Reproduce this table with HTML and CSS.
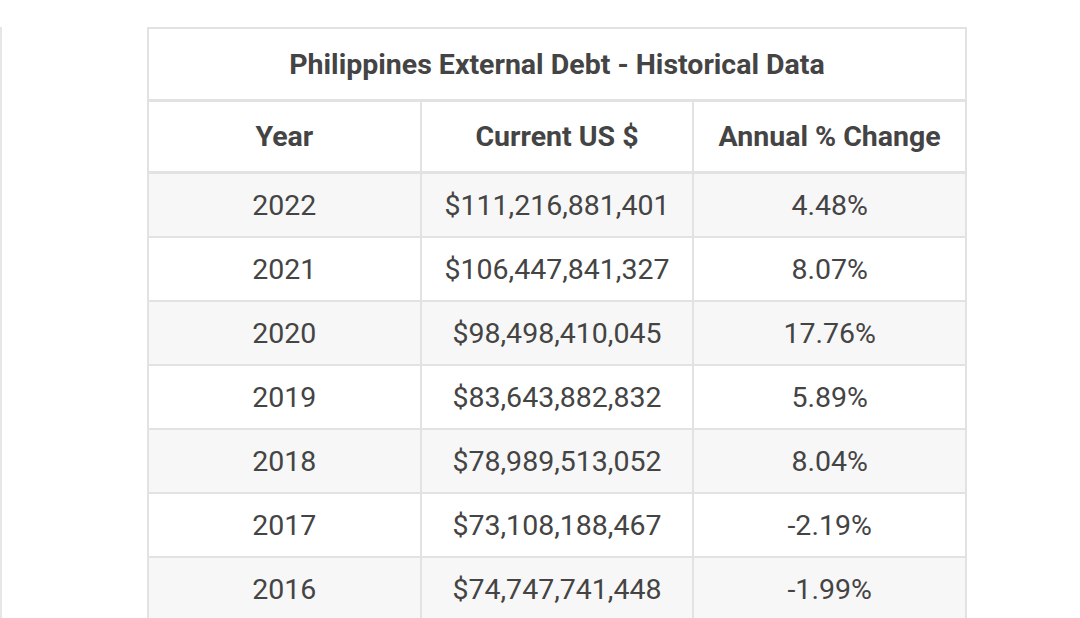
FILE: index.html
```html
<!DOCTYPE html>
<html>
<head>
<meta charset="utf-8">
<link rel="stylesheet" href="styles.css">
</head>
<body>
<div class="page">
  <table class="debt">
    <thead>
      <tr class="title-row"><th colspan="3">Philippines External Debt - Historical Data</th></tr>
      <tr class="head-row"><th>Year</th><th>Current US $</th><th>Annual % Change</th></tr>
    </thead>
    <tbody>
      <tr><td>2022</td><td>$111,216,881,401</td><td>4.48%</td></tr>
      <tr><td>2021</td><td>$106,447,841,327</td><td>8.07%</td></tr>
      <tr><td>2020</td><td>$98,498,410,045</td><td>17.76%</td></tr>
      <tr><td>2019</td><td>$83,643,882,832</td><td>5.89%</td></tr>
      <tr><td>2018</td><td>$78,989,513,052</td><td>8.04%</td></tr>
      <tr><td>2017</td><td>$73,108,188,467</td><td>-2.19%</td></tr>
      <tr><td>2016</td><td>$74,747,741,448</td><td>-1.99%</td></tr>
    </tbody>
  </table>
</div>
</body>
</html>
```
FILE: styles.css
```css
html, body {
  margin: 0;
  padding: 0;
  background: #ffffff;
  overflow: hidden;
}
body {
  font-family: Roboto, "Liberation Sans", sans-serif;
  color: #444444;
}
.page {
  margin-top: 27px;
  border-left: 2px solid #e6e6e6;
  padding-left: 145px;
  height: 591px;
  overflow: hidden;
}
.debt {
  border-collapse: collapse;
  width: 820px;
  table-layout: fixed;
  border: 2px solid #e2e2e2;
}
.debt th, .debt td {
  border: 2px solid #e2e2e2;
  text-align: center;
  padding: 0;
}
.title-row th {
  height: 70px;
  font-size: 28.5px;
  font-weight: 700;
  border-bottom-width: 3px;
}
.head-row th {
  height: 69px;
  font-size: 28.5px;
  font-weight: 700;
  border-bottom-width: 3px;
}
.debt td {
  height: 62px;
  font-size: 28.5px;
  font-weight: 400;
}
.debt tbody tr:nth-child(odd) td {
  background: #f7f7f7;
}
```
